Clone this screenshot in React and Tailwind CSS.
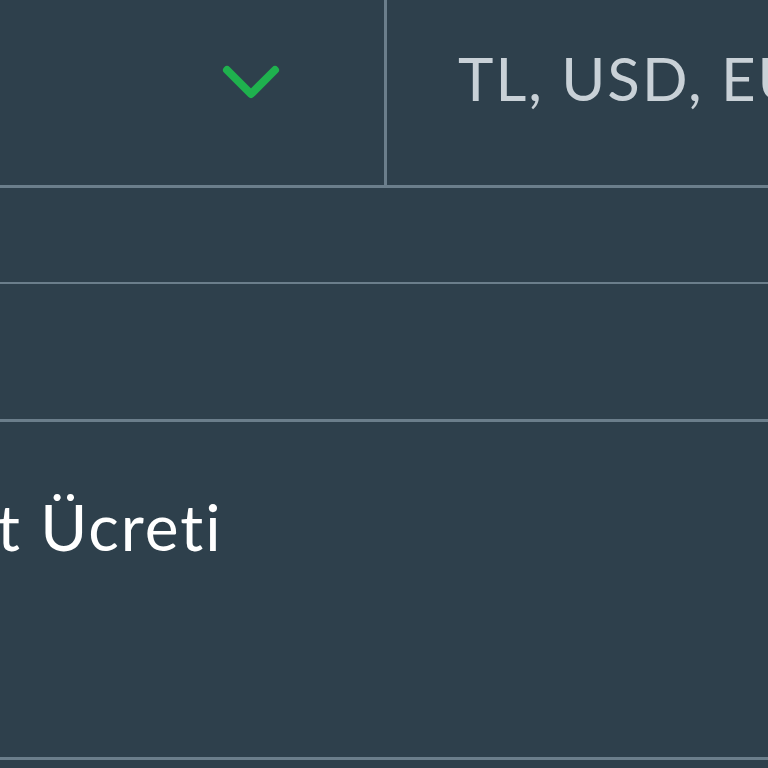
import React from "react";

const Chevron = () => (
  <svg width="60" height="36" viewBox="0 0 60 36" fill="none">
    <path
      d="M6 6 L30 30 L54 6"
      stroke="#1fb14e"
      strokeWidth="8"
      strokeLinecap="round"
      strokeLinejoin="round"
    />
  </svg>
);

export default function App() {
  return (
    <div
      className="w-[768px] h-[768px] overflow-hidden bg-[#2e404c] text-white"
      style={{ fontFamily: "Lato, 'Noto Sans', sans-serif" }}
    >
      {/* Top row: select + currency cell */}
      <div className="flex h-[188px] border-b-[3px] border-[#6b7e8b]">
        <div className="w-[384px] shrink-0 flex items-start justify-end pt-[64px] pr-[103px]">
          <Chevron />
        </div>
        <div className="w-[3px] shrink-0 bg-[#6b7e8b]" />
        <div className="flex-1 min-w-0 pl-[71px] pt-[42px]">
          <span className="text-[60px] leading-[72px] text-[#c9d1d7] whitespace-nowrap tracking-[2px] [font-variant-ligatures:none]">
            TL, USD, EUR
          </span>
        </div>
      </div>

      {/* Empty row */}
      <div className="h-[96px] border-b-2 border-[#6b7e8b]" />

      {/* Empty row */}
      <div className="h-[138px] border-b-[3px] border-[#6b7e8b]" />

      {/* Label row */}
      <div className="h-[338px] border-b-[3px] border-[#6b7e8b] pt-[67px]">
        <span className="block -ml-[3px] text-[64px] leading-[76px] whitespace-nowrap tracking-[2px] [font-variant-ligatures:none]">
          t Ücreti
        </span>
      </div>
    </div>
  );
}
